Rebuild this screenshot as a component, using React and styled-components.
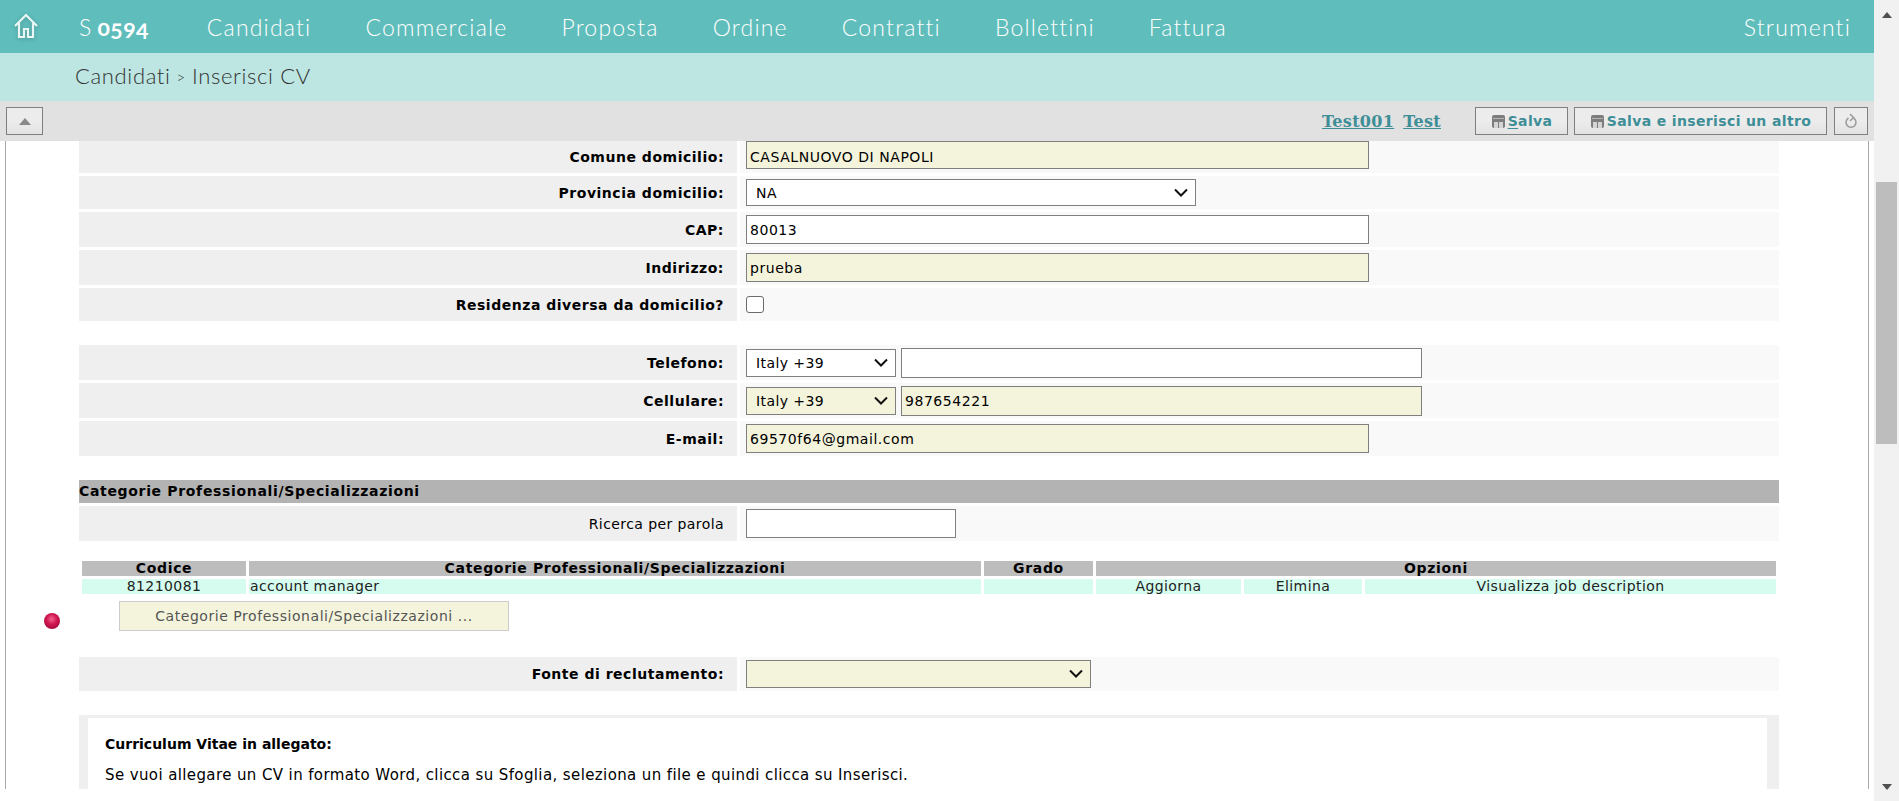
import styled, { createGlobalStyle } from 'styled-components';

const GlobalStyle = createGlobalStyle`
  html, body {
    margin: 0;
    padding: 0;
    height: 100%;
    overflow: hidden;
    background: #fff;
  }
  * { box-sizing: border-box; }
`;

const sans = `'DejaVu Sans', Verdana, sans-serif`;
const title = `Lato, 'Open Sans', sans-serif`;

const Page = styled.div`
  display: flex;
  width: 1899px;
  height: 801px;
`;
const Main = styled.div`
  width: 1874px;
  display: flex;
  flex-direction: column;
`;
const Nav = styled.nav`
  height: 53px;
  background: #5fbdbb;
  display: flex;
  align-items: center;
  padding: 0 23px 0 12px;
  color: #fff;
  font-family: ${title};
  font-size: 23px;
  font-weight: 300;
  letter-spacing: 1.2px;
`;
const Home = styled.svg`
  width: 28px;
  height: 28px;
  margin: -2px 39px 0 0;
  filter: drop-shadow(0 1px 2px rgba(40, 90, 90, 0.4));
`;
const NavItems = styled.div`
  display: flex;
  gap: 54px;
  flex: 1;
`;
const Code = styled.span`
  margin-right: 4px;
  b {
    font-weight: 700;
    margin-left: 5px;
    letter-spacing: 0.4px;
    font-variant-numeric: oldstyle-nums;
  }
`;
const Crumb = styled.div`
  height: 48px;
  background: #bde5e1;
  padding: 0 0 3px 75px;
  display: flex;
  align-items: center;
  color: #333;
  font-family: ${title};
  font-size: 22px;
  font-weight: 300;
  letter-spacing: 0.65px;
`;
const CrumbSep = styled.span`
  font-size: 15px;
  margin: 2px 6px 0;
`;
const Toolbar = styled.div`
  height: 40px;
  background: #e1e1e1;
  display: flex;
  align-items: center;
  padding: 0 6px;
`;
const ToolButton = styled.button`
  height: 28px;
  width: ${(p) => p.$w}px;
  margin-left: ${(p) => p.$ml || 0}px;
  padding: 0;
  display: flex;
  align-items: center;
  justify-content: center;
  gap: 2px;
  border: 1px solid #7f7f7f;
  background: linear-gradient(#ececec 0%, #ececec 50%, #e3e3e3 100%);
  color: #3e8e97;
  font-family: ${sans};
  font-size: 14px;
  font-weight: 700;
  letter-spacing: 0.36px;
  u { text-underline-offset: 2px; }
`;
const UserLink = styled.a`
  font-family: 'DejaVu Serif', serif;
  font-size: 16px;
  font-weight: 700;
  letter-spacing: 0.3px;
  color: #3e8e97;
  text-decoration: underline;
  margin-left: ${(p) => p.$ml || 0}px;
`;
const Spacer = styled.div`
  flex: 1;
`;
const Sheet = styled.div`
  width: 1864px;
  height: 648px;
  margin-left: 5px;
  padding: 0 89px 0 73px;
  border-left: 1px solid #aaa;
  border-right: 1px solid #aaa;
  overflow: hidden;
  font-family: ${sans};
  font-size: 14px;
  letter-spacing: 0.42px;
  color: #000;
`;
const Rows = styled.div`
  display: flex;
  flex-direction: column;
  gap: 3px;
  margin-top: ${(p) => p.$mt || 0}px;
`;
const Row = styled.div`
  display: grid;
  grid-template-columns: 658px 1fr;
  column-gap: 3px;
  height: ${(p) => p.$h || 35}px;
`;
const Label = styled.div`
  background: #efefef;
  display: flex;
  align-items: center;
  justify-content: flex-end;
  padding-right: 13px;
  font-weight: ${(p) => (p.$plain ? 400 : 700)};
  letter-spacing: ${(p) => (p.$plain ? 0.42 : 0.52)}px;
`;
const Value = styled.div`
  background: #f9f9f9;
  display: flex;
  align-items: ${(p) => (p.$top ? 'flex-start' : 'center')};
  padding-left: 6px;
  gap: 5px;
`;
const Input = styled.input`
  width: ${(p) => p.$w}px;
  height: ${(p) => p.$h || 29}px;
  padding: ${(p) => (p.$top ? '3px' : '0')} 3px 0;
  border: 1px solid #7f7f7f;
  border-radius: 0;
  background: ${(p) => (p.$req ? '#f4f4dc' : '#fff')};
  color: #000;
  font-family: ${sans};
  font-size: 14px;
  letter-spacing: 0.55px;
  outline: none;
`;
const SelectBox = styled.div`
  position: relative;
  width: ${(p) => p.$w}px;
  height: ${(p) => p.$h || 28}px;
  padding-left: 9px;
  display: flex;
  align-items: center;
  border: 1px solid #7f7f7f;
  background: ${(p) => (p.$req ? '#f4f4dc' : '#fff')};
  svg {
    position: absolute;
    right: 7px;
    top: 50%;
    margin-top: -5px;
  }
`;
const Check = styled.span`
  width: 18px;
  height: 17px;
  background: #fff;
  border: 1px solid #6b6b6b;
  border-radius: 3px;
`;
const SectionTitle = styled.div`
  height: 23px;
  line-height: 23px;
  background: #b3b3b3;
  font-weight: 700;
  letter-spacing: 0.67px;
`;
const CatTable = styled.table`
  width: 1700px;
  margin-top: 17px;
  border-collapse: separate;
  border-spacing: 3px;
  table-layout: fixed;
  th, td {
    height: 15px;
    padding: 0;
    line-height: 15px;
    text-align: center;
    font-weight: 400;
  }
  th {
    background: #bdbdbd;
    font-weight: 700;
    letter-spacing: 0.67px;
  }
  td {
    background: #d5fcef;
    color: #222;
  }
  td.left {
    text-align: left;
    padding-left: 1px;
  }
`;
const AddRow = styled.div`
  position: relative;
  height: 30px;
  margin-top: 4px;
`;
const Ball = styled.span`
  position: absolute;
  left: -35px;
  top: 12px;
  width: 16px;
  height: 16px;
  border-radius: 50%;
  background: radial-gradient(circle at 48% 38%, #f0648c 0%, #d11850 40%, #8c0632 100%);
`;
const AddButton = styled.button`
  margin-left: 40px;
  width: 390px;
  height: 30px;
  padding: 0;
  background: #f4f4dc;
  border: 1px solid #ccc;
  color: #555;
  font-family: ${sans};
  font-size: 14px;
  letter-spacing: 0.55px;
`;
const CvBox = styled.div`
  margin-top: 24px;
  padding: 3px 12px 0 9px;
  background: #efefef;
`;
const CvInner = styled.div`
  background: #fff;
  padding: 18px 17px 30px;
  height: 200px;
  font-size: 15px;
  b {
    display: block;
    margin-bottom: 15px;
    line-height: 16px;
    font-size: 14px;
    letter-spacing: 0;
  }
  p {
    margin: 0;
    line-height: 16px;
    letter-spacing: 0.39px;
  }
`;
const ScrollBar = styled.div`
  width: 25px;
  height: 801px;
  background: #f1f1f1;
  padding: 0 2px;
  display: flex;
  flex-direction: column;
  align-items: center;
`;
const Arrow = styled.span`
  width: 0;
  height: 0;
  border-left: 5px solid transparent;
  border-right: 5px solid transparent;
  ${(p) => (p.$down ? 'border-top: 6px solid #505050;' : 'border-bottom: 6px solid #505050;')}
  margin-top: ${(p) => p.$mt}px;
`;
const Thumb = styled.div`
  width: 21px;
  height: 262px;
  margin-top: 164px;
  background: #bdbdbd;
`;

const Chevron = () => (
  <svg width="14" height="9" viewBox="0 0 14 9">
    <path d="M1 1.5l6 6 6-6" fill="none" stroke="#111" strokeWidth="2" />
  </svg>
);

const SaveIcon = () => (
  <svg width="15" height="15" viewBox="0 0 15 15">
    <rect x="1" y="1" width="13" height="13" rx="2" fill="#7d7d7d" />
    <rect x="2" y="4" width="11" height="1" fill="#b5b5b5" />
    <rect x="3" y="8" width="4" height="6" fill="#d4d4d4" />
    <rect x="8" y="8" width="4" height="6" fill="#d4d4d4" />
  </svg>
);

const Field = ({ label, h, plain, top, children }) => (
  <Row $h={h}>
    <Label $plain={plain}>{label}</Label>
    <Value $top={top}>{children}</Value>
  </Row>
);

export default function App() {
  return (
    <Page>
      <GlobalStyle />
      <Main>
        <Nav>
          <Home viewBox="0 0 28 28">
            <path
              d="M3 14L14 3l11 11M7 11v14h5v-8h4v8h5V11"
              fill="none"
              stroke="#e8f6f5"
              strokeWidth="2.2"
            />
          </Home>
          <NavItems>
            <Code>
              S<b>0594</b>
            </Code>
            <span>Candidati</span>
            <span>Commerciale</span>
            <span>Proposta</span>
            <span>Ordine</span>
            <span>Contratti</span>
            <span>Bollettini</span>
            <span>Fattura</span>
          </NavItems>
          <span>Strumenti</span>
        </Nav>
        <Crumb>
          Candidati<CrumbSep>&gt;</CrumbSep>Inserisci CV
        </Crumb>
        <Toolbar>
          <ToolButton $w={37}>
            <svg width="12" height="7" viewBox="0 0 12 7">
              <path d="M6 0l6 7H0z" fill="#8a8a8a" />
            </svg>
          </ToolButton>
          <Spacer />
          <UserLink>Test001</UserLink>
          <UserLink $ml={9}>Test</UserLink>
          <ToolButton $w={93} $ml={34}>
            <SaveIcon />
            <span>
              <u>S</u>alva
            </span>
          </ToolButton>
          <ToolButton $w={253} $ml={6}>
            <SaveIcon />
            <span>Salva e inserisci un altro</span>
          </ToolButton>
          <ToolButton $w={34} $ml={7}>
            <svg width="14" height="18" viewBox="0 0 14 18">
              <path d="M9.5 6a5 5 0 1 1-5 0" fill="none" stroke="#9a9a9a" strokeWidth="1.5" />
              <path d="M6 2l3.5 3.5L6 9" fill="none" stroke="#9a9a9a" strokeWidth="1.5" />
            </svg>
          </ToolButton>
        </Toolbar>
        <Sheet>
          <Rows>
            <Field label="Comune domicilio:" h={32} top>
              <Input $w={623} $h={28} $req $top defaultValue="CASALNUOVO DI NAPOLI" />
            </Field>
            <Field label="Provincia domicilio:" h={33}>
              <SelectBox $w={450} $h={27}>
                NA
                <Chevron />
              </SelectBox>
            </Field>
            <Field label="CAP:">
              <Input $w={623} defaultValue="80013" />
            </Field>
            <Field label="Indirizzo:">
              <Input $w={623} $req defaultValue="prueba" />
            </Field>
            <Field label="Residenza diversa da domicilio?" h={33}>
              <Check />
            </Field>
          </Rows>
          <Rows $mt={24}>
            <Field label="Telefono:">
              <SelectBox $w={150}>
                Italy +39
                <Chevron />
              </SelectBox>
              <Input $w={521} $h={30} />
            </Field>
            <Field label="Cellulare:">
              <SelectBox $w={150} $req>
                Italy +39
                <Chevron />
              </SelectBox>
              <Input $w={521} $h={30} $req defaultValue="987654221" />
            </Field>
            <Field label="E-mail:">
              <Input $w={623} $req defaultValue="69570f64@gmail.com" />
            </Field>
          </Rows>
          <Rows $mt={24}>
            <SectionTitle>Categorie Professionali/Specializzazioni</SectionTitle>
            <Field label="Ricerca per parola" plain>
              <Input $w={210} />
            </Field>
          </Rows>
          <CatTable>
            <colgroup>
              <col style={{ width: 164 }} />
              <col style={{ width: 732 }} />
              <col style={{ width: 109 }} />
              <col style={{ width: 145 }} />
              <col style={{ width: 118 }} />
              <col />
            </colgroup>
            <thead>
              <tr>
                <th>Codice</th>
                <th>Categorie Professionali/Specializzazioni</th>
                <th>Grado</th>
                <th colSpan={3}>Opzioni</th>
              </tr>
            </thead>
            <tbody>
              <tr>
                <td>81210081</td>
                <td className="left">account manager</td>
                <td />
                <td>Aggiorna</td>
                <td>Elimina</td>
                <td>Visualizza job description</td>
              </tr>
            </tbody>
          </CatTable>
          <AddRow>
            <Ball />
            <AddButton>Categorie Professionali/Specializzazioni ...</AddButton>
          </AddRow>
          <Rows $mt={26}>
            <Field label="Fonte di reclutamento:" h={34}>
              <SelectBox $w={345} $req>
                <Chevron />
              </SelectBox>
            </Field>
          </Rows>
          <CvBox>
            <CvInner>
              <b>Curriculum Vitae in allegato:</b>
              <p>Se vuoi allegare un CV in formato Word, clicca su Sfoglia, seleziona un file e quindi clicca su Inserisci.</p>
            </CvInner>
          </CvBox>
        </Sheet>
      </Main>
      <ScrollBar>
        <Arrow $mt={12} />
        <Thumb />
        <Arrow $down $mt={340} />
      </ScrollBar>
    </Page>
  );
}
